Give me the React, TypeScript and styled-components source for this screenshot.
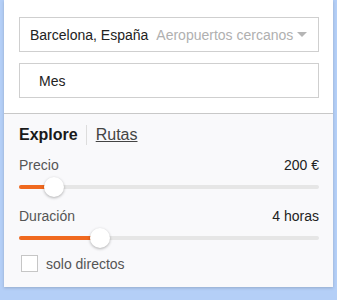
import React from "react";
import styled, { createGlobalStyle } from "styled-components";

const GlobalStyle = createGlobalStyle`
    html, body {
        margin: 0;
        padding: 0;
        background: #b4cff7;
        font-family: "Liberation Sans", Arial, sans-serif;
    }
`;

const Map = styled.div`
    width: 337px;
    height: 300px;
    background: #b4cff7;
    padding: 0 4px;
    box-sizing: border-box;
`;

const Panel = styled.div`
    width: 329px;
    background: #f9f9fb;
    box-shadow: 0 1px 3px rgba(0, 0, 0, 0.18);
`;

const Top = styled.div`
    background: #fff;
    padding: 17px 14px 15px 15px;
    border-bottom: 1px solid #c8c8c8;
    display: flex;
    flex-direction: column;
    gap: 11px;
`;

const Field = styled.div<{ $indent?: number }>`
    height: 35px;
    border: 1px solid #cfcfcf;
    box-sizing: border-box;
    display: flex;
    align-items: center;
    padding: 0 11px 0 ${(p) => p.$indent ?? 10}px;
    font-size: 14px;
    color: #222;
    white-space: nowrap;
`;

const Hint = styled.span`
    color: #b0b0b0;
    margin-left: 8px;
    flex: 1;
`;

const Caret = styled.span`
    width: 0;
    height: 0;
    border-left: 5px solid transparent;
    border-right: 5px solid transparent;
    border-top: 5px solid #b5b5b5;
`;

const Bottom = styled.div`
    padding: 10px 14px 15px 15px;
`;

const Tabs = styled.div`
    display: flex;
    align-items: center;
    height: 22px;
    font-size: 16px;
    margin-bottom: 10px;
`;

const Tab = styled.span<{ $active?: boolean }>`
    color: ${(p) => (p.$active ? "#1a1a1a" : "#444")};
    font-weight: ${(p) => (p.$active ? 600 : 400)};
    text-decoration: ${(p) => (p.$active ? "none" : "underline")};
`;

const TabBar = styled.span`
    width: 1px;
    height: 20px;
    background: #ddd;
    margin: 0 9px 0 8px;
`;

const Row = styled.div`
    display: flex;
    justify-content: space-between;
    font-size: 14px;
    color: #555;
    height: 18px;
    align-items: center;
`;

const Value = styled.span`
    color: #222;
`;

const Track = styled.div`
    position: relative;
    height: 4px;
    background: #e6e6e6;
    border-radius: 2px;
    margin: 11px 0 18px;
`;

const Fill = styled.div`
    height: 100%;
    background: #f0691f;
    border-radius: 2px;
`;

const Thumb = styled.div`
    position: absolute;
    top: 50%;
    width: 20px;
    height: 20px;
    margin: -10px 0 0 -10px;
    border-radius: 50%;
    background: #fff;
    box-shadow: 0 1px 3px rgba(0, 0, 0, 0.3);
`;

const Check = styled.label`
    display: flex;
    align-items: center;
    gap: 8px;
    font-size: 14px;
    color: #555;
    margin-top: -3px;
`;

const Box = styled.span`
    width: 15px;
    height: 15px;
    margin-left: 2px;
    border: 1px solid #c6c6c6;
    background: #fff;
`;

const Slider = ({ pct }: { pct: number }) => (
    <Track>
        <Fill style={{ width: `${pct}%` }} />
        <Thumb style={{ left: `${pct}%` }} />
    </Track>
);

const App = () => (
    <>
        <GlobalStyle />
        <Map>
            <Panel>
                <Top>
                    <Field>
                        Barcelona, España
                        <Hint>Aeropuertos cercanos</Hint>
                        <Caret />
                    </Field>
                    <Field $indent={19}>Mes</Field>
                </Top>
                <Bottom>
                    <Tabs>
                        <Tab $active>Explore</Tab>
                        <TabBar />
                        <Tab>Rutas</Tab>
                    </Tabs>
                    <Row>
                        Precio
                        <Value>200 €</Value>
                    </Row>
                    <Slider pct={11.5} />
                    <Row>
                        Duración
                        <Value>4 horas</Value>
                    </Row>
                    <Slider pct={27} />
                    <Check>
                        <Box />
                        solo directos
                    </Check>
                </Bottom>
            </Panel>
        </Map>
    </>
);

export default App;
